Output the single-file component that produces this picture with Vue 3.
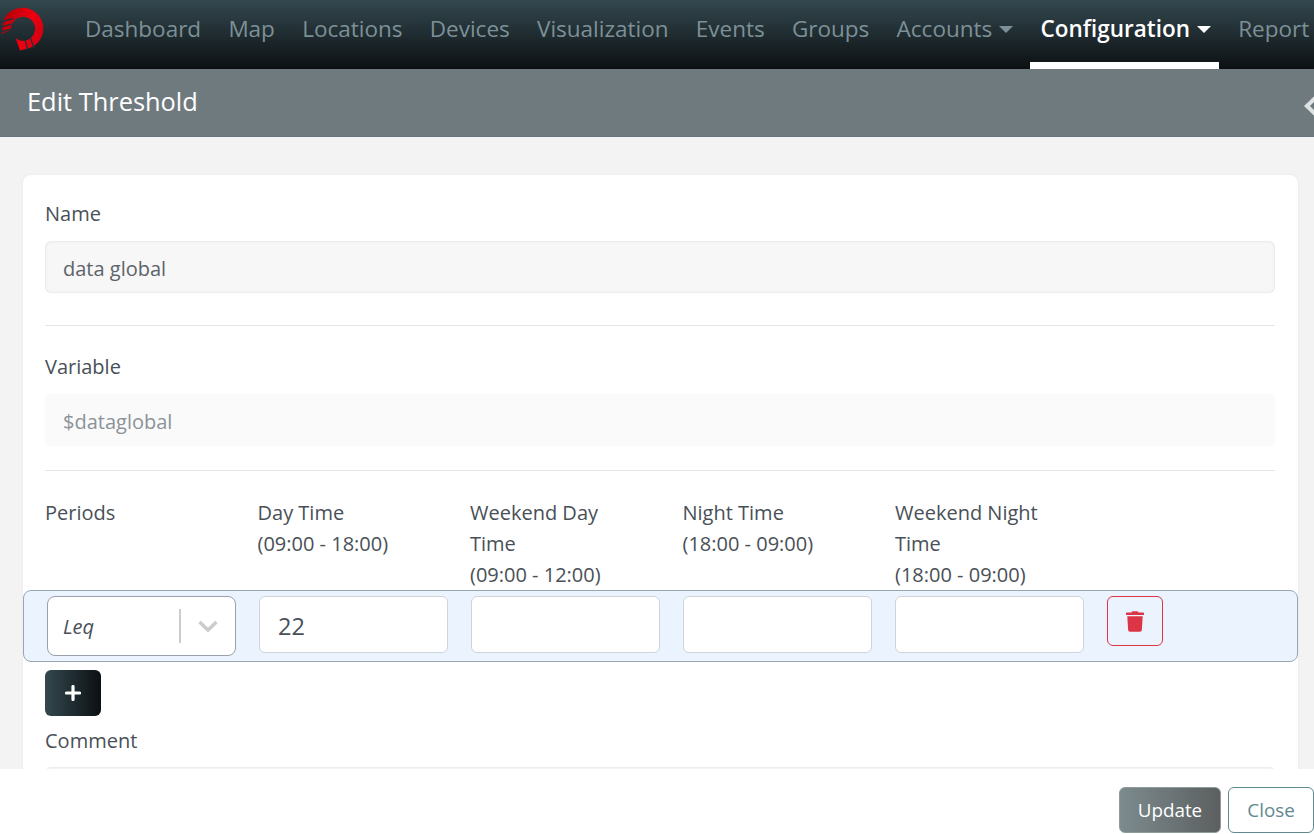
<template>
  <div class="page">
    <nav class="navbar">
      <svg class="logo" width="46" height="50" viewBox="0 0 46 50">
        <defs>
          <linearGradient id="ring" x1="0" y1="0" x2="1" y2="0.4">
            <stop offset="0" stop-color="#a80008" />
            <stop offset="0.7" stop-color="#ee0010" />
            <stop offset="1" stop-color="#d80010" />
          </linearGradient>
        </defs>
        <path d="M3.500 17 A20.800 20.800 0 1 1 27 45.800 L20 47.500 L15.500 35 A12 12 0 1 0 11.200 27 L1.500 31 Z" fill="url(#ring)" />
        <path d="M0 19 L13 15.500 M0 24.500 L12 21 M0 29 L12 26 M25 37 L28 47 M30.500 35 L34 45" fill="none" stroke="#1f3238" stroke-width="1.300" />
      </svg>
      <ul class="nav-list">
        <li v-for="item in menu" :key="item.label" class="nav-item" :class="{ active: item.active }">
          {{ item.label }}<span v-if="item.caret" class="caret"></span>
        </li>
      </ul>
    </nav>

    <header class="title-bar">
      <h1>Edit Threshold</h1>
      <span class="collapse-handle"></span>
    </header>

    <main class="content">
      <section class="card">
        <label class="field-label">Name</label>
        <div class="input input--readonly">data global</div>
        <hr />

        <label class="field-label">Variable</label>
        <div class="input input--disabled">$dataglobal</div>
        <hr class="hr-tight" />

        <div class="period-head">
          <div v-for="col in columns" :key="col.join()" class="period-col">
            <div v-for="line in col" :key="line">{{ line }}</div>
          </div>
        </div>

        <div class="period-row">
          <div class="select">
            <span class="select__value">Leq</span>
            <span class="select__sep"></span>
            <svg class="select__arrow" width="20" height="20" viewBox="0 0 20 20">
              <path d="M1.500 6 L10 14 L18.500 6" fill="none" stroke="#ccc" stroke-width="3.500" />
            </svg>
          </div>
          <div class="cell-input">22</div>
          <div class="cell-input"></div>
          <div class="cell-input"></div>
          <div class="cell-input"></div>
          <button class="btn-delete" type="button" aria-label="Delete">
            <svg width="18" height="21" viewBox="0 0 448 512">
              <path fill="#dc3545" d="M432 32H312l-9.400-18.700A24 24 0 0 0 281.100 0H166.800a23.700 23.700 0 0 0-21.400 13.300L136 32H16A16 16 0 0 0 0 48v32a16 16 0 0 0 16 16h416a16 16 0 0 0 16-16V48a16 16 0 0 0-16-16zM53.200 467a48 48 0 0 0 47.900 45h245.800a48 48 0 0 0 47.900-45L416 128H32z" />
            </svg>
          </button>
        </div>

        <button class="btn-add" type="button" aria-label="Add">
          <svg width="16" height="16" viewBox="0 0 16 16">
            <path d="M8 1.500 V14.500 M1.500 8 H14.500" stroke="#fff" stroke-width="3.200" stroke-linecap="round" />
          </svg>
        </button>

        <label class="field-label field-label--comment">Comment</label>
        <div class="input input--readonly"></div>
      </section>
    </main>

    <footer class="footer">
      <button class="btn-update" type="button">Update</button>
      <button class="btn-close" type="button">Close</button>
    </footer>
  </div>
</template>

<script setup>
const menu = [
  { label: "Dashboard" },
  { label: "Map" },
  { label: "Locations" },
  { label: "Devices" },
  { label: "Visualization" },
  { label: "Events" },
  { label: "Groups" },
  { label: "Accounts", caret: true },
  { label: "Configuration", caret: true, active: true },
  { label: "Report" }
]

// Заголовки колонок периодов
const columns = [
  ["Periods"],
  ["Day Time", "(09:00 - 18:00)"],
  ["Weekend Day", "Time", "(09:00 - 12:00)"],
  ["Night Time", "(18:00 - 09:00)"],
  ["Weekend Night", "Time", "(18:00 - 09:00)"]
]
</script>

<style>
html,
body {
  margin: 0;
  overflow: hidden;
}
</style>

<style scoped>
.page {
  width: 1314px;
  height: 834px;
  display: flex;
  flex-direction: column;
  overflow: hidden;
  background: #f3f3f3;
  font-family: "Open Sans", "Noto Sans", sans-serif;
  font-size: 20px;
  color: #495057;
}
.navbar {
  height: 69px;
  flex: none;
  display: flex;
  background: linear-gradient(180deg, #33484f 0%, #0c1012 100%);
  overflow: hidden;
}
.logo {
  flex: none;
  width: 46px;
  height: 50px;
  margin: 3px 28px 0 0;
}
.nav-list {
  display: flex;
  gap: 5.25px;
  margin: 0;
  padding: 0;
  list-style: none;
}
.nav-item {
  padding: 0 11px;
  height: 69px;
  line-height: 58px;
  box-sizing: border-box;
  color: #7d9097;
  font-size: 22.5px;
  white-space: nowrap;
}
.nav-item.active {
  color: #fff;
  font-weight: 600;
  border-bottom: 7px solid #fff;
  padding-right: 8px;
  margin-right: 3px;
}
.caret {
  display: inline-block;
  margin-left: 7px;
  vertical-align: 4px;
  border-top: 7px solid currentColor;
  border-left: 7px solid transparent;
  border-right: 7px solid transparent;
}
.title-bar {
  height: 68px;
  flex: none;
  display: flex;
  align-items: center;
  justify-content: space-between;
  padding-left: 27px;
  box-sizing: border-box;
  background: #6f7a7f;
  border-bottom: 1px solid #66757b;
  overflow: hidden;
}
.title-bar h1 {
  margin: 0 0 3px;
  color: #fff;
  font-size: 25.4px;
  font-weight: 400;
}
.collapse-handle {
  width: 14px;
  height: 14px;
  margin-right: -12px;
  margin-top: 6px;
  border-left: 4px solid #dfe2e3;
  border-bottom: 4px solid #dfe2e3;
  transform: rotate(45deg);
}
.content {
  flex: 1;
  min-height: 0;
  overflow: hidden;
  padding: 38px 16px 0 23px;
}
.card {
  background: #fff;
  border-radius: 8px;
  padding: 23px 23px 0 22px;
  box-shadow: 0 0 2px rgba(0, 0, 0, 0.08);
}
.field-label {
  display: block;
  line-height: 31px;
  margin-bottom: 12px;
  color: #495057;
}
.input {
  height: 52px;
  line-height: 48px;
  padding: 4px 18px 0;
  border-radius: 6px;
  box-sizing: border-box;
}
.input--readonly {
  background: #f7f7f7;
  box-shadow: inset 0 0 3px rgba(0, 0, 0, 0.12);
  color: #5c636a;
}
.input--disabled {
  background: #fafafa;
  color: #8b9298;
}
hr {
  margin: 32px 0 25px;
  border: 0;
  border-top: 1px solid #e4e4e4;
}
hr.hr-tight {
  margin: 24px 0 26px;
}
.period-head {
  display: grid;
  grid-template-columns: repeat(5, 212.5px);
  line-height: 31px;
  height: 93px;
}
.period-col {
  padding-right: 40px;
}
.period-row {
  display: grid;
  grid-template-columns: repeat(5, 189px) 56px;
  column-gap: 23px;
  align-items: start;
  height: 72px;
  box-sizing: border-box;
  margin: 0 -23px 0 -22px;
  padding: 5px 23px;
  background: #ebf3fe;
  border: 1px solid #98a6b5;
  border-radius: 8px;
}
.select {
  height: 60px;
  display: flex;
  align-items: center;
  background: #fff;
  border: 1px solid #9aa1a8;
  border-radius: 8px;
  box-sizing: border-box;
}
.select__value {
  flex: 1;
  padding-left: 15px;
  font-style: italic;
}
.select__sep {
  width: 2px;
  height: 34px;
  background: #ccc;
}
.select__arrow {
  margin: 0 17px 0 17px;
}
.cell-input {
  height: 57px;
  line-height: 58px;
  padding: 0 18px;
  font-size: 23.5px;
  background: #fff;
  border: 1px solid #ced4da;
  border-radius: 6px;
  box-sizing: border-box;
}
.btn-delete {
  width: 56px;
  height: 50px;
  padding: 0;
  display: flex;
  align-items: center;
  justify-content: center;
  background: transparent;
  border: 1px solid #dc3545;
  border-radius: 6px;
}
.btn-add {
  display: flex;
  align-items: center;
  justify-content: center;
  width: 56px;
  height: 46px;
  margin-top: 8px;
  padding: 0;
  border: 0;
  border-radius: 6px;
  background: linear-gradient(90deg, #33484f 0%, #0c1012 100%);
}
.field-label--comment {
  margin: 9px 0 11px;
}
.footer {
  height: 65px;
  flex: none;
  display: flex;
  justify-content: flex-end;
  align-items: flex-end;
  gap: 7px;
  padding-bottom: 1px;
  box-sizing: border-box;
  background: #fff;
  position: relative;
}
.btn-update,
.btn-close {
  height: 46px;
  border-radius: 6px;
  font-family: inherit;
  font-size: 18.8px;
}
.btn-update {
  width: 102px;
  color: #fff;
  border: 1px solid #8f9a9c;
  background: linear-gradient(90deg, #7c8b8e 0%, #5c5f60 100%);
}
.btn-close {
  width: 86px;
  color: #5f8a90;
  background: #fff;
  border: 1px solid #5f8a90;
}
</style>
